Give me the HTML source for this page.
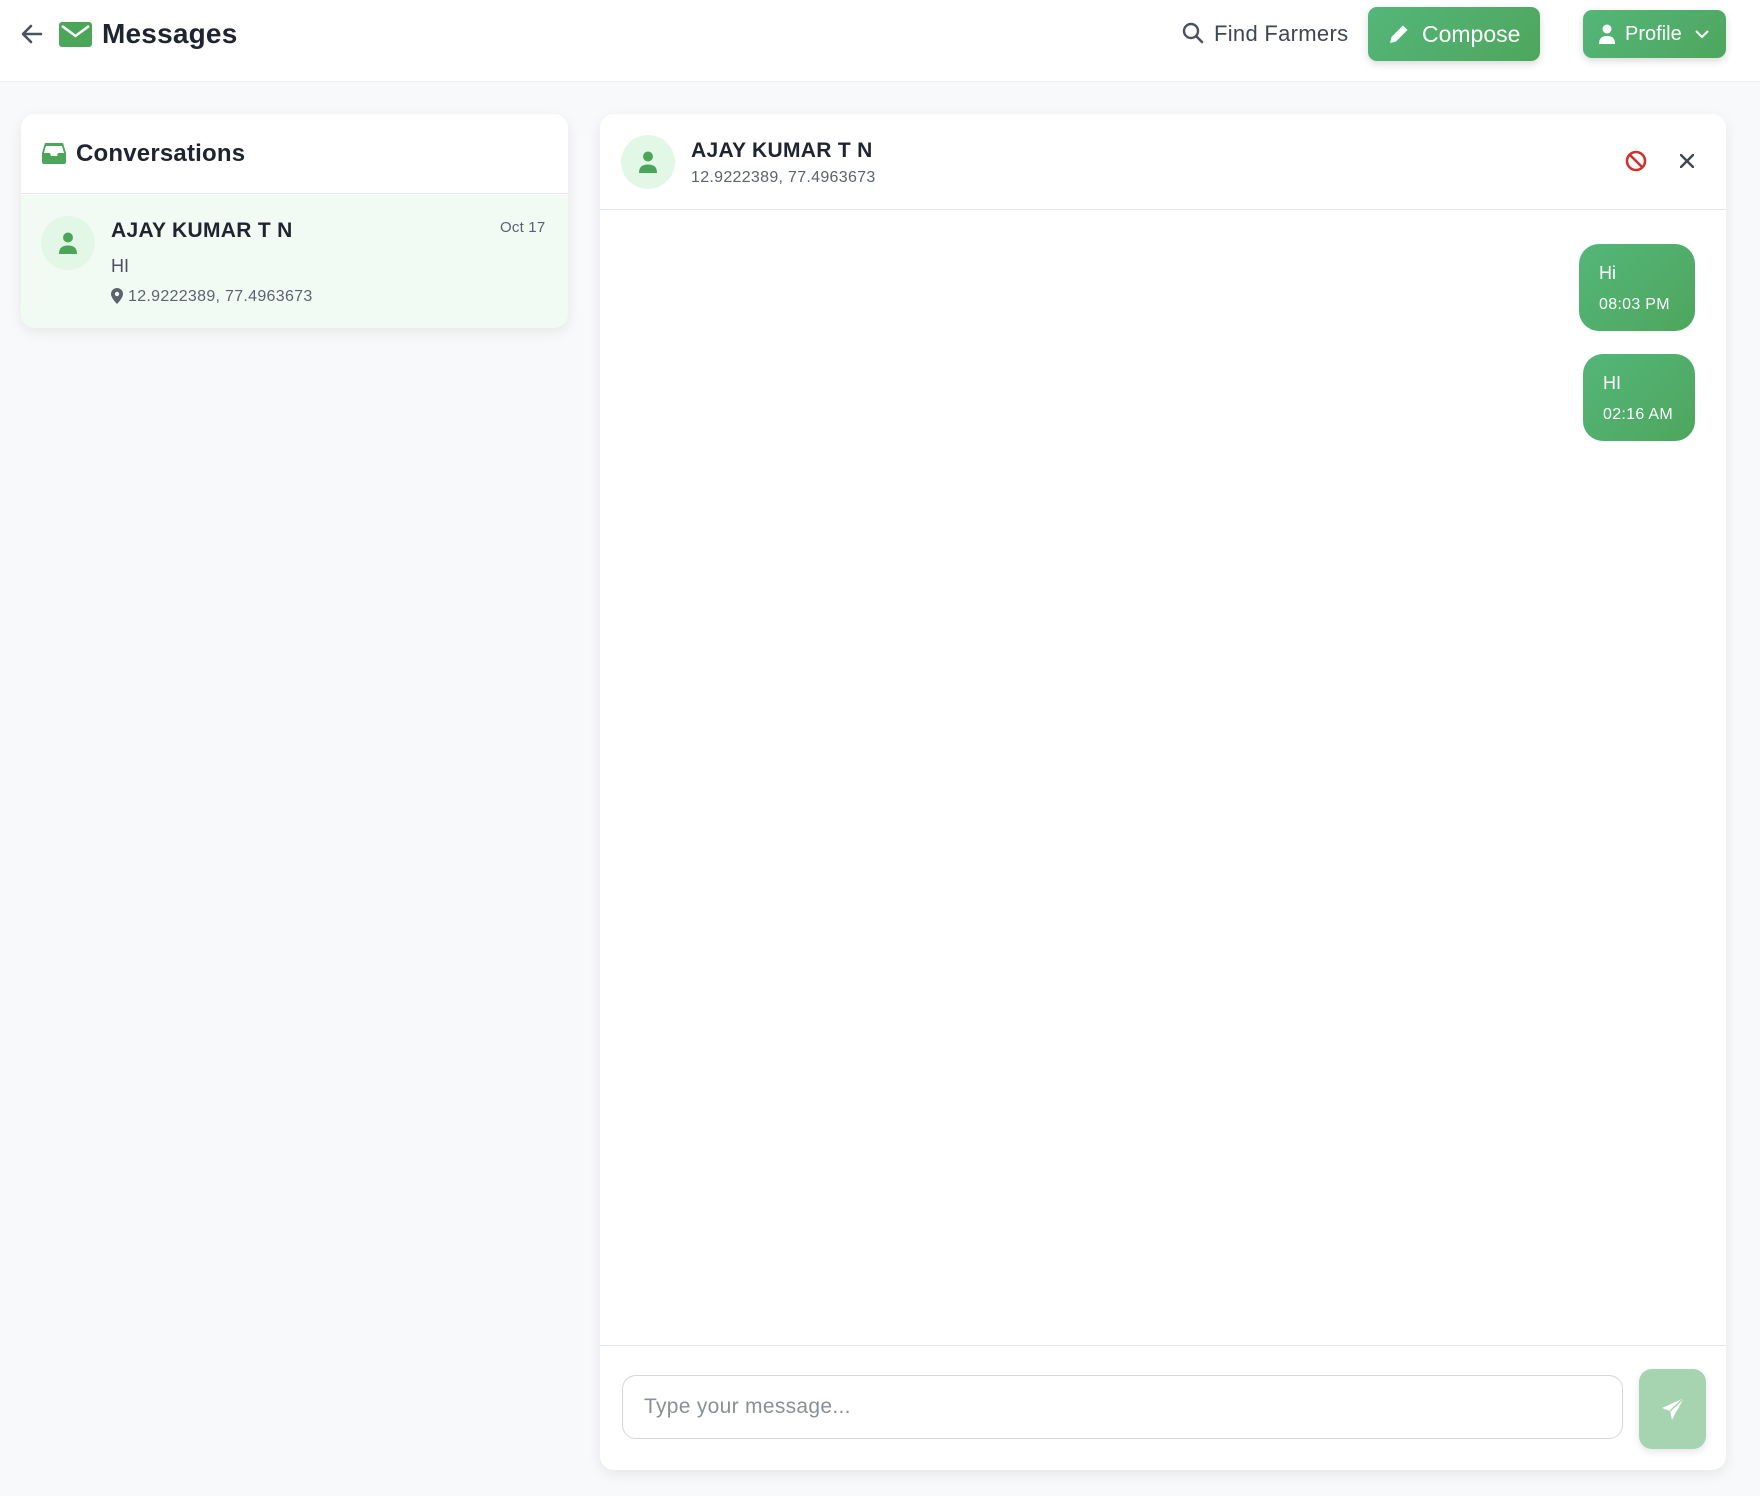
<!DOCTYPE html>
<html><head><meta charset="utf-8"><style>
*{box-sizing:border-box;margin:0;padding:0}
body{width:1760px;height:1496px;background:#f8f9fb;font-family:"Liberation Sans",sans-serif;color:#1f2430;position:relative;overflow:hidden}
.hdr{position:absolute;left:0;top:0;width:1760px;height:82px;background:#fff;border-bottom:1px solid #eceef1}
.abs{position:absolute}
.btn{position:absolute;border-radius:9px;background:linear-gradient(135deg,#54b67a,#4ea65c);color:#fff;box-shadow:0 3px 8px rgba(0,0,0,.15);display:flex;align-items:center}
.card{position:absolute;background:#fff;border-radius:14px;box-shadow:0 4px 14px rgba(0,0,0,.08)}
.av{position:absolute;width:54px;height:54px;border-radius:50%;background:#e2f7e6;display:flex;align-items:center;justify-content:center}
.bub{position:absolute;border-radius:20px;background:linear-gradient(135deg,#54b67a,#4ea65c);color:#fff;padding:0 20px}
</style></head><body>
<div class="hdr">
 <svg class="abs" style="left:20px;top:22px" width="24" height="24" viewBox="0 0 24 24"><path d="M21 12H4M11 4l-8 8 8 8" fill="none" stroke="#4b5160" stroke-width="2.6" stroke-linecap="round" stroke-linejoin="round"/></svg>
 <svg class="abs" style="left:59px;top:22px" width="33" height="25" viewBox="0 0 33 25"><rect width="33" height="25" rx="3" fill="#4ca65a"/><path d="M3 4l13.5 10L30 4" fill="none" stroke="#fff" stroke-width="2.5"/></svg>
 <div class="abs" style="left:102px;top:18px;font-size:28px;font-weight:bold;color:#1f2430;letter-spacing:0.2px">Messages</div>
 <svg class="abs" style="left:1182px;top:22px" width="22" height="22" viewBox="0 0 22 22"><circle cx="9" cy="9" r="7" fill="none" stroke="#4b5160" stroke-width="2.4"/><path d="M14 14l6 6" stroke="#4b5160" stroke-width="2.6" stroke-linecap="round"/></svg>
 <div class="abs" style="left:1214px;top:21px;font-size:22px;color:#3f4654;letter-spacing:0.3px">Find Farmers</div>
 <div class="btn" style="left:1368px;top:7px;width:172px;height:54px;font-size:23px;padding-left:20px">
  <svg width="22" height="22" viewBox="0 0 22 22" style="margin-right:12px"><path d="M2 20l1.5-6L15 2.5l4.5 4.5L8 18.5z" fill="#fff"/></svg>Compose</div>
 <div class="btn" style="left:1583px;top:10px;width:143px;height:48px;font-size:20px;padding-left:15px">
  <svg width="18" height="20" viewBox="0 0 18 20" style="margin-right:9px"><circle cx="9" cy="5" r="4.5" fill="#fff"/><path d="M1 20c0-6 3-8 8-8s8 2 8 8z" fill="#fff"/></svg>Profile
  <svg width="16" height="10" viewBox="0 0 16 10" style="margin-left:12px"><path d="M2 2l6 6 6-6" fill="none" stroke="#fff" stroke-width="2"/></svg></div>
</div>

<div class="card" style="left:21px;top:114px;width:547px;height:214px;overflow:hidden">
 <div style="height:80px;border-bottom:1px solid #e3e6ea;position:relative">
  <svg class="abs" style="left:21px;top:28px" width="24" height="22" viewBox="0 0 24 22"><path d="M3 1h18l3 10v9a2 2 0 0 1-2 2H2a2 2 0 0 1-2-2v-9z" fill="#4ca65a"/><path d="M4 4h16l2 7h-6l-1 3H9l-1-3H2z" fill="#fff"/></svg>
  <div class="abs" style="left:55px;top:26px;font-size:24px;font-weight:bold;letter-spacing:0.2px">Conversations</div>
 </div>
 <div style="position:absolute;left:0;top:81px;width:547px;height:133px;background:#f1fbf4">
  <div class="av" style="left:20px;top:21px"><svg width="20" height="22" viewBox="0 0 20 22"><circle cx="10" cy="5.5" r="5" fill="#4ca65a"/><path d="M1 22c0-6 3-8.5 9-8.5s9 2.5 9 8.5z" fill="#4ca65a"/></svg></div>
  <div class="abs" style="left:90px;top:24px;font-size:21px;font-weight:bold;color:#1f2430;letter-spacing:0.3px">AJAY KUMAR T N</div>
  <div class="abs" style="left:479px;top:24px;font-size:15px;color:#5b6270;letter-spacing:0.2px">Oct 17</div>
  <div class="abs" style="left:90px;top:61px;font-size:18px;color:#4b5160">HI</div>
  <svg class="abs" style="left:90px;top:93px" width="12" height="16" viewBox="0 0 12 16"><path d="M6 0a6 6 0 0 0-6 6c0 4 6 10 6 10s6-6 6-10a6 6 0 0 0-6-6z" fill="#5b6270"/><circle cx="6" cy="6" r="2.2" fill="#f1fbf4"/></svg>
  <div class="abs" style="left:107px;top:93px;font-size:16px;color:#5b6270;letter-spacing:0.3px">12.9222389, 77.4963673</div>
 </div>
</div>

<div class="card" style="left:600px;top:114px;width:1126px;height:1356px">
 <div style="height:96px;border-bottom:1px solid #e3e6ea;position:relative">
  <div class="av" style="left:21px;top:21px"><svg width="20" height="22" viewBox="0 0 20 22"><circle cx="10" cy="5.5" r="5" fill="#4ca65a"/><path d="M1 22c0-6 3-8.5 9-8.5s9 2.5 9 8.5z" fill="#4ca65a"/></svg></div>
  <div class="abs" style="left:91px;top:25px;font-size:21px;font-weight:bold;letter-spacing:0.3px">AJAY KUMAR T N</div>
  <div class="abs" style="left:91px;top:55px;font-size:16px;color:#5b6270;letter-spacing:0.3px">12.9222389, 77.4963673</div>
  <svg class="abs" style="left:1025px;top:36px" width="22" height="22" viewBox="0 0 22 22"><circle cx="11" cy="11" r="9" fill="none" stroke="#d0302b" stroke-width="2.6"/><path d="M5 5l12 12" stroke="#d0302b" stroke-width="2.6"/></svg>
  <svg class="abs" style="left:1080px;top:40px" width="14" height="14" viewBox="0 0 14 14"><path d="M1 1l12 12M13 1L1 13" stroke="#3f4654" stroke-width="2.4" stroke-linecap="round"/></svg>
 </div>
 <div class="bub" style="left:979px;top:130px;width:116px;height:87px">
  <div style="position:absolute;left:20px;top:19px;font-size:18px">Hi</div>
  <div style="position:absolute;left:20px;top:52px;font-size:16px;white-space:nowrap;letter-spacing:0.3px">08:03 PM</div>
 </div>
 <div class="bub" style="left:983px;top:240px;width:112px;height:87px">
  <div style="position:absolute;left:20px;top:19px;font-size:18px">HI</div>
  <div style="position:absolute;left:20px;top:52px;font-size:16px;white-space:nowrap;letter-spacing:0.3px">02:16 AM</div>
 </div>
 <div style="position:absolute;left:0;top:1231px;width:1126px;border-top:1px solid #e3e6ea"></div>
 <div style="position:absolute;left:22px;top:1261px;width:1001px;height:64px;border:1px solid #d4d6dc;border-radius:14px;font-size:21px;color:#8a8f99;padding:19px 0 0 21px;letter-spacing:0.3px">Type your message...</div>
 <div style="position:absolute;left:1039px;top:1255px;width:67px;height:80px;border-radius:13px;background:#a6d4b0;box-shadow:0 3px 8px rgba(0,0,0,.1);display:flex;align-items:center;justify-content:center">
  <svg width="24" height="24" viewBox="0 0 24 24"><path d="M23 1L1 11l8 3 2 9 3-6z" fill="#fff"/><path d="M23 1L9 14" stroke="#a6d4b0" stroke-width="1.5"/></svg>
 </div>
</div>
</body></html>
